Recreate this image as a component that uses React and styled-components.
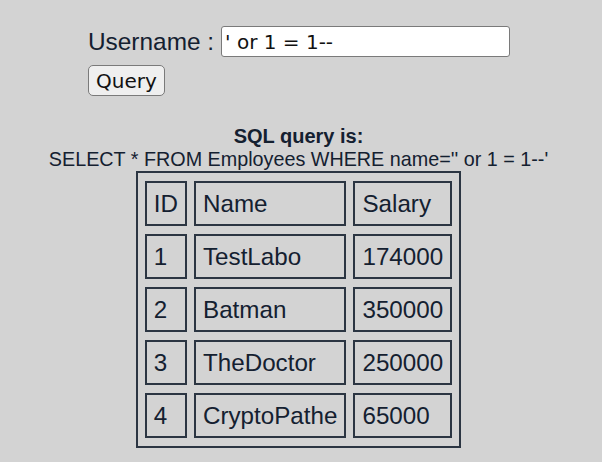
import React from 'react';
import styled, { createGlobalStyle } from 'styled-components';

const GlobalStyle = createGlobalStyle`
  html, body {
    margin: 0;
    padding: 0;
    background: #d3d3d3;
  }
  * {
    box-sizing: border-box;
  }
`;

const employees = [
  { id: 1, name: 'TestLabo', salary: 174000 },
  { id: 2, name: 'Batman', salary: 350000 },
  { id: 3, name: 'TheDoctor', salary: 250000 },
  { id: 4, name: 'CryptoPathe', salary: 65000 },
];

const App = () => {
  return (
    <Page>
      <GlobalStyle />
      <Form>
        <Row>
          <Label>Username :</Label>
          <Input type="text" defaultValue="' or 1 = 1--" />
        </Row>
        <Button>Query</Button>
      </Form>
      <Result>
        <Heading>SQL query is:</Heading>
        <Query>SELECT * FROM Employees WHERE name='' or 1 = 1--'</Query>
        <Table>
          <thead>
            <tr>
              <Cell as="th">ID</Cell>
              <Cell as="th">Name</Cell>
              <Cell as="th">Salary</Cell>
            </tr>
          </thead>
          <tbody>
            {employees.map((e) => (
              <tr key={e.id}>
                <Cell>{e.id}</Cell>
                <Cell>{e.name}</Cell>
                <Cell>{e.salary}</Cell>
              </tr>
            ))}
          </tbody>
        </Table>
      </Result>
    </Page>
  );
};

const Page = styled.div`
  width: 602px;
  height: 462px;
  overflow: hidden;
  color: #142030;
  font-family: 'Liberation Sans', Arial, sans-serif;
`;

const Form = styled.div`
  padding: 26px 0 0 88px;
  display: flex;
  flex-direction: column;
  align-items: flex-start;
  gap: 8px;
`;

const Row = styled.div`
  display: flex;
  align-items: center;
  gap: 7px;
`;

const Label = styled.label`
  font-size: 24.4px;
  line-height: 31px;
`;

const Input = styled.input`
  width: 289px;
  height: 31px;
  padding: 0 3px;
  font-family: 'DejaVu Sans', sans-serif;
  font-size: 20px;
  color: #111;
  background: #fff;
  border: 1px solid #7a7a7a;
  border-radius: 3px;
  outline: none;
`;

const Button = styled.button`
  height: 31px;
  padding: 0 7px;
  font-family: 'DejaVu Sans', sans-serif;
  font-size: 20px;
  color: #111;
  background: #efefef;
  border: 1px solid #7a7a7a;
  border-radius: 5px;
`;

const Result = styled.div`
  width: 597px;
  margin-top: 29px;
  display: flex;
  flex-direction: column;
  align-items: center;
  line-height: 23px;
`;

const Heading = styled.div`
  font-size: 20px;
  font-weight: bold;
`;

const Query = styled.div`
  font-size: 19.75px;
`;

const Table = styled.table`
  border: 2px solid #2b3542;
  border-spacing: 7px 8px;
  font-size: 24.2px;
`;

const Cell = styled.td`
  height: 45px;
  padding: 0 7px;
  border: 2px solid #2b3542;
  text-align: left;
  font-weight: normal;
  white-space: nowrap;
`;

export default App;
